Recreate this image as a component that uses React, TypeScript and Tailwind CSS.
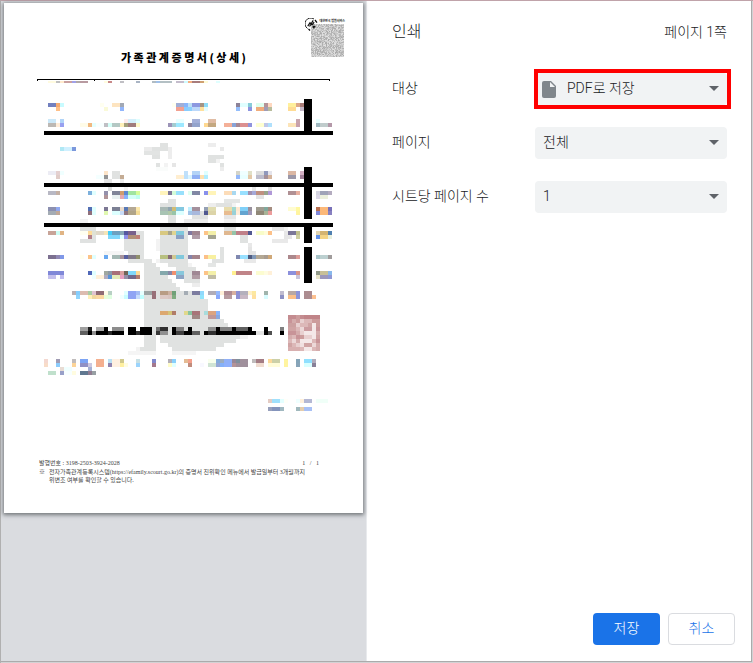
import type { ReactNode } from 'react';

const CELL = 4;

// Rows of the document body: y position, then "column[-lastColumn]:colour".
const WATERMARK: [number, string][] = [
  [143, '40-41:e0e2e1 52-53:ededed'],
  [147, '36-37:ebebeb 38-41:e0e2e1 42:ededed 55:e9e9e9'],
  [151, '36-39:e2e4e3 42:ededed'],
  [155, '38-39:e0e2e1 42:ededed 52-55:e0e2e1'],
  [159, '52-53:e0e2e1 54:f3f3f3'],
  [163, '39:e0e2e1 41:f3f3f3 43:e6e6e6 55:e0e2e1'],
  [167, '39-41:fafcfb 55:ededed'],
  [171, '28-29:e0e2e1'],
  [175, '28-29:e0e2e1'],
  [179, '26-27:e6e6e6 30:ededed'],
  [187, '27:e0e2e1 31:f3f3f3 63:e8e8e8 67:e4e4e4'],
  [199, '42-43:e0e2e1 56-59:e4e6e5'],
  [203, '40-43:e0e2e1 52-53:ededed 54-57:e0e2e1 58:f3f3f3'],
  [207, '40-43:e0e2e1'],
  [211, '48-51:e0e2e1'],
  [215, '42-43:e0e2e1 48-51:e0e2e1 56-58:e6e6e6'],
  [219, '20-21:f3f3f3 42-43:e0e2e1 46-51:ededed 56-58:f3f3f3'],
  [227, '20-23:e0e2e1 40-46:e0e2e1 56-58:e0e2e1 68-70:e8e8e8 71:f3f3f3'],
  [231, '23:e0e2e1 31-35:e0e2e1 40-46:e0e2e1 71:e8e8e8'],
  [235, '23:e0e2e1 31-35:e0e2e1 40-46:e0e2e1 60-61:e0e2e1 71-72:e6e6e6'],
  [239, '20-23:e0e2e1 31-35:e0e2e1 39:f3f3f3 40-46:e0e2e1 60-61:e0e2e1 68-71:e9e9e9'],
  [243, '31-35:e0e2e1 39:f3f3f3 40-46:e0e2e1 62:e8e8e8'],
  [247, '31-35:e0e2e1 39:f3f3f3 40-46:e0e2e1 55:e0e2e1 62:e4e4e4'],
  [251, '26-30:f5f5f5 32-35:e0e2e1 40-46:e0e2e1 55:e0e2e1 62-63:e4e4e4'],
  [255, '35:e0e2e1 40-46:e0e2e1 55:e0e2e1'],
  [259, '32-37:e0e2e1 39:f3f3f3 40-46:e0e2e1 53-55:e0e2e1 61-63:e9e9e9'],
  [263, '36-38:e0e2e1 42-46:e0e2e1 47:f3f3f3 52-53:e4e6e5'],
  [267, '36-39:e0e2e1 44-48:e0e2e1'],
  [271, '36-39:e0e2e1 46-47:e0e2e1'],
  [275, '36-41:e0e2e1 46-47:e0e2e1'],
  [279, '36-42:e0e2e1 46-49:e0e2e1'],
  [283, '36-43:e0e2e1 48-49:ededed'],
  [287, '36-44:e0e2e1'],
  [291, '36-50:e0e2e1'],
  [295, '36-50:e0e2e1'],
  [299, '36-51:e0e2e1'],
  [303, '36-51:e0e2e1'],
  [307, '36-51:e0e2e1'],
  [311, '36-52:e0e2e1'],
  [315, '36-53:e0e2e1'],
  [319, '36-55:e0e2e1'],
  [323, '36-56:e0e2e1'],
  [327, '36-56:e0e2e1'],
  [331, '36-61:e0e2e1'],
  [335, '36-38:e0e2e1 40-59:e0e2e1 60-61:f3f3f3'],
  [339, '36-38:e0e2e1 40-58:e0e2e1'],
  [343, '36-38:e0e2e1 42-55:e0e2e1'],
  [347, '34:f3f3f3 35-38:e0e2e1 43-53:e0e2e1'],
  [351, '32-38:f5f5f5 43-48:f5f5f5'],
];

const MOSAIC: [number, string][] = [
  [103, '12-13:7280bf 14:f4aa70 15:c8fbff 25:fffff0 28-29:fde4c0 30:a2a8b4 43:fffff0 44-45:a0aed6 46:88b4fa 47:bcdff5 48-49:8c98e0 50:a49484 51:8cdcf8 59:8c8298 60-61:e0ffff 62:88ccd8 64-65:dfffee 66:b49498 67:ffd8c0 72-73:fff09c 74:dca888 75:a87c78'],
  [107, '14:ffc088 26:fafad8 30:92b6fc 44-45:f2a090 46:88ccff 47:8cd0fc 48-49:bcd8fa 50:ffe09c 51:e4fcff 59:94befc 62:8c94e0 64-65:f0ac7c 66:a09cb4 67:b8bc9c 72-73:ffdc94 75:c4b8c8'],
  [119, '12-13:cce8f8 15:b0d4f8 31:ffeaea 32-33:d4f0fa 34:e0ffff 44-45:e8ffff 48-49:a4b0d8 52-53:e0bca4 74:c8a4ac 79:e8ffff'],
  [123, '12-13:bcb8b4 14:ffecd8 15:98a0f0 20-21:fffce8 22:f0b880 23:e4ffff 24-25:f8ffff 26:c0bfc4 27:d4fff8 28-29:b4c8c4 30:fff0b8 31:a4a07c 32-33:a07c7c 34:fff8c8 42:9c94b8 43:a4ccd0 44-45:9ce8ff 47:9088a0 48-49:94a4cc 51:ffd890 52-53:c4a880 56-57:f4b098 58:88a4d8 59:a88894 60-61:dc9090 62:9094dc 64-65:ffffd0 66:c0c8e8 67:b0e0fc 72-73:fce4b8 74:c8a0ac 79:a0b8c0 80-81:c0cccc 82:b498a8'],
  [147, '15:b0e8f4 16-17:d0f0ff 18:7c98dc'],
  [171, '12-13:ececf4 14:e4d0d0 15:f0ffff 26:fce4c8 46:c0e0fa 48-49:b4d4f6 51:e0ffff 59:d4d4c8 60-61:f0ffff 62:e0e0c8 64-65:dcdcdc 66:9098bc 67:e4e4ec 72-73:dcb8a4 75:d4b0c4'],
  [175, '14:e0ccc8 24-25:f4ffff 26:949494 30:c4ac94 44-45:ffeed0 46:bce0fc 47:d8f4ff 48-49:90b0f4 50:ffe0b0 51:b0ecff 59:94b8fa 60-61:e8ffff 62:e4c8a8 64-65:bcbccc 66:a49098 67:d4b49c 72-73:9c98a8 75:a08098'],
  [191, '12-13:b8b8c4 14:c4b0a4 22:7cb0dc 23:e0ffff 26:9490ac 28-29:808498 30:d09c6c 31:5c88d0 32-33:a0e4a0 34:d4fc98 40-41:fff4bc 42:807898 43:d4fcd8 44-45:98e0fc 47:e0fff0 48-49:8088a4 51:8890ec 52-53:fff4b8 56-57:fcdcb8 58:a8d8f0 60-61:98e0ff 62:a090b0 63:a4a8d8 64-65:c09080 66:98a48c 67:b098d8 72-73:b09094 74:e8b0a0 79:d4d4e0 80-81:a0a4b8 82:b4acc0'],
  [195, '26:b09498 28-29:e8f0f0 30:e4a8b0 31:88b4fc 32-33:d4fff8 34:c0fff0 64-65:e4e4e4 79:dcd8e8 80-81:ecf0dc'],
  [207, '12-13:8c90b0 14:90a8f0 22:5470b4 23:e0ffff 26:7c7894 28-29:7c8094 30:ecdccc 31:5878b4 32-33:b4a894 34:fce8ac 40-41:a8b8b4 42:90a4b0 43:d0bc74 44-45:84c8e0 47:c0f0ff 48-49:a4909c 51:94a0b4 52-53:e0dcb0 56-57:e8dcac 58:a0d8d0 59:ffe8d0 60-61:80d0f8 62:98909c 64-65:a09c90 66:80a89c 67:a48c80 72-73:fffcd0 74:fff8a0 79:b87050 80-81:fcb878 82:7870b8'],
  [211, '12-13:a4acb4 14:c0a898 22:90707c 23:e0ffff 26:e0f8b0 28-29:dcffff 30:c8dcf8 31:907880 32-33:b0a488 34:f4dc98 40-41:a8c4b4 42:b0c8a8 43:98c4a8 44-45:dcffff 47:a0c4e8 48-49:a8b8dc 51:505890 52-53:dcd4a8 56-57:e8bc90 58:98d0d8 59:ffecd8 60-61:64a4d0 62:a098b8 64-65:908878 66:a8b498 67:ec9c9c 74:fff4a0 79:8088d8 80-81:fcb878 82:8880c0'],
  [231, '12-13:c8a498 14:ccfcf4 15:e0b484 20-21:fffff0 22:ffdc98 23:e0e2d4 24-25:e0d8c8 26:f4e4b8 27:44ccf8 28-29:6ca0c0 30:88a8b8 31:5458a0 32-33:78608c 40-41:d8c880 42:a8a48c 43:e0d490 44-45:80c8dc 47:8078a0 48-49:a08490 51:fcc488 52-53:f4f0a8 56-57:e0b890 58:94c4a8 59-61:c08088 62:505890 64-65:f8fcc8 66:fffcd8 67:fcc088 72-73:7c7898 74:c0c08c 79:e0d4b0 80-81:d4b470 82:5080b0'],
  [235, '22:b48088 27-29:80d8fc 30:e0ffff 31:9090e8 32-33:b09078 34:c08078 44-45:88a0c4 48-49:b09ca8 52-53:a4a490 74:d0d0a0 79:6090e8 80-81:f4d484 82:e8f0e0'],
  [255, '12-13:7c7090 14:9088b4 15:8098e8 20:fffff0 22:fcc488 23:e0ffff 26:68a8f0 28-29:a4b8b4 30:a8949c 31:5860a0 32-33:807888 34:90906c 40-41:b8c080 42:886c78 43:d0c890 44-45:80c8dc 47:8484ac 48-49:a4848c 51:fcc088 52-53:f8f0a0 59:8088b0 60-61:98e0ff 62:505c80 63:8098b8 64-65:b4a894 66:a89c90 67:d0a878 72-73:ac888c 74:dc9c98 79:a8c4c8 80-81:bcd0d0 82:a09c9c'],
  [271, '12-15:8088d8 22:5068b8 23:e0ffff 26:a0a8a0 27:8c98a4 28-29:a87078 30:d8a0a0 31:706458 32-33:80d8fc 34:fcdc98 40-41:84a8ac 42:8888a8 43:f09070 44-45:88c8dc 48-49:a08894 51:fcc488 52-53:f4f0a8 58:fff090 59-62:c08488 64-65:fcfcd0 66:fffce0 67:fff0d8 72-73:8c90dc 74:d89488 79:909888 80-81:c8c098 82:88b8ec'],
  [275, '12-13:c4c0ec 15:c0bcf0 23:f0ffff 24-25:fff0d8 26:b0acc0 27:5894d8 28-29:e4ecb8 30:e8a0c0 31:9490a8 32-33:70688c 34:b07c70 44-45:8ca4c4 48-49:b09ca4 52-53:c0bca4 74:c8c4dc 79:e8e4c8 80-81:9c98bc 82:9098d4'],
  [291, '18:b8b0b4 19:84ccfc 20-21:dcbcb0 22:a8cca4 23:e0c4d0 24-25:906c74 26:fffce8 27:b8d0c4 31:e0ffff 32-33:90a4f4 34:a4bcf4 35:e8ffff 36-37:9ca4a4 38:987078 40-41:b89c84 42:ccb0a0 43:70a078 46:a4acb4 48-49:7c7ca0 50:90d8fc 52-53:b0acb8 54:94b8fc 55:fff0d8 56-57:b08c94 58:d8b0a0 59:8c90d4 60-61:b4b0bc 62:fff0c8 63:fce8a0 66:a0b4ac 70:c0bcd0 72-73:b8a8a4 74:8c94d8 76-77:ac8c90'],
  [295, '19:90d4fc 22:fff0b8 23:f0d8a0 24-25:fcd8a0 26:e8ffd8 27:e0ffe0 30:f0ffff 31:c8fcff 32-33:90a4f4 34:c8dcfc 35:c0ffff 38:987078 40-41:dcc8c4 42:d8c4c0 43:80ac80 50:90e4fc 54:88a8fc 56-57:b89ca0 59:8c90d4 60-61:c8b8c4 63:ffe0a0 66:d8fcff 70:8c90c4 72-73:fcc088 74:8c94d8 76-77:ac8c90 78:fcc090'],
  [311, '40-41:dca870 42:d4c478 43:b07c68 46:e0d88c 47:88c4a0 48-49:a87478 51:a8dcdc 52-53:dca480 54:88b4fc'],
  [315, '48-49:a08884 52-53:c09898 54:88a8e0'],
  [327, '20-21:a0a0a0 22:202020 24-25:a8a8a8 26:000000 28-30:8c8c8c 32-33:000000 35-37:000000 39:707070 40-41:303030 43:000000 44-45:808080 47:000000 52-53:909090 54:000000 55-57:808080 58:000000 59-61:606060 62:000000 66:000000 70:808080'],
  [331, '20-21:606060 22:000000 23:909090 24-26:000000 27:282828 28-30:000000 32-33:000000 34:303030 35-37:000000 39:383838 40-41:909090 43:000000 44-45:404040 46-47:000000 48-49:606060 51:000000 52-53:303030 54-63:000000 64-65:e4e4e4 66:000000 67:505050 70:000000'],
  [359, '11:f4d8d0 14:a09cb4 18:c0bcbc 20-21:7ca4f4 24-25:f4b090 27:b8e0f4 28-29:fff0e0 30:d0c88c 34:c8e0e4 38:8088cc 42:b4b0b8 43:88d0fc 46:e4bc94 47:f4a08c 52-53:f8ffec 54:84acdc 55:9cacc0 56-57:90b0f8 58:988898 59:80909c 60-61:a0909c 63:c0bcbc 64-65:a47c84 67:fcd898 68-69:ccd0a8 71:fff4a0 74:84a4b8 76-77:90e0ff 78:b0acbc'],
  [363, '11:f8dcc8 14:8cccfc 18:fcd498 20-21:9090c4 22:ccc8e0 24-25:f4b090 27:9084b0 28-29:fff0e0 30:fff0a0 31:fffce0 34:9cd4fc 38:a4788c 42:fffcc8 43:e0ffff 47:c08c7c 50:f8f8ff 52-53:d0e4d4 54:94a8d8 55:84b0f8 56-57:90b0fc 58:b49498 59-61:a0909c 64-65:f0dcd0 67-69:fffcd8 71:fff4a0 74:88a4b8 76-77:d8ffff 78:888098'],
  [367, '15:e8dcd4 16-17:f0ffff 22:a4b0d4'],
  [371, '12-13:c0e0cc 15:98a0c8 16-17:f8ffff 18:fffce0 20-21:607890 22:907c90 23:98a0a4'],
  [399, '67:e4ccc4 68-69:a0e0fc 70:e4ffff 71:fffff8 74:f0ffff 75:fff0dc 76-77:b4b8d4 79-81:f0fff8'],
  [407, '67:98a0bc 68-69:8494bc 70:a0b8c0 74:a0b8bc 75:e4ccac 76-77:a8c0f4'],
];

const SEAL: [number, string][] = [
  [315, '72-73:c48c90 74:cc9c9c 75:c48c90 76-79:c08488'],
  [319, '72:c89498 73:d4acac 74:cc9c9c 75:e8d0d0 76-77:dcb8b8 78-79:cc9c9c'],
  [323, '72-73:cca0a0 74:e8d0d0 75-76:dcb8b8 77:d0a4a4 78:f4e8e8 79:cc9c9c'],
  [327, '72-73:d0a4a4 74:dcb8b8 75:ecd8d8 76-77:cc9ca0 78:f4e8e8 79:c89498'],
  [331, '72-73:c89498 74:d4acac 75:e8d0d0 76-78:f4e8e8 79:d4acac'],
  [335, '72:d4acac 73:dcb8b8 74:c89498 75:cc9c9c 76-77:e8d0d0 78:f4e8e8 79:d0a4a4'],
  [339, '72:dcb8b8 73:ecd8d8 74:d4acac 75:f4e8e8 76-77:f4e8e8 78:dcb8b8 79:c89498'],
  [343, '72:d0a4a4 73:dcb8b8 74:e8d0d0 75:f0e0e0 76-77:d0a4a4 78:ecd8d8 79:d4acac'],
  [347, '72-74:d8b0b0 75:dcb8b8 76-77:f4e8e8 78:dcb8b8 79:d4acac'],
];

const HEADER_ROW: [number, string][] = [
  [81, '12-13:fffbe0 14:c0c0c0 15:ffeacc 16-17:c9a0a0 18:a0a0e8 19:b0a8a8 20-21:b89aa0 26:fffde0 27:c88888 30:c0bfc4 34:a9b4c4 38:b0bcc4 39:a0c0e8 40-42:b4c0c4 44-45:c4bccc 46:d0fbff 47:f4b080 48-49:a87c7c 50:cfa070 51:fffcd8 54:e0ffff'],
];

function Cells({ rows, height = CELL }: { rows: [number, string][]; height?: number }) {
  return (
    <>
      {rows.flatMap(([y, cells]) =>
        cells.split(' ').map((cell) => {
          const [span, color] = cell.split(':');
          const [from, to = from] = span.split('-').map(Number);
          return (
            <rect
              key={`${y}-${from}`}
              x={from * CELL}
              y={y}
              width={(to - from + 1) * CELL}
              height={height}
              fill={`#${color}`}
            />
          );
        }),
      )}
    </>
  );
}

function CertificateBody() {
  return (
    <svg
      className="mt-[13px] ml-8 h-[336px] w-[300px]"
      viewBox="36 79 300 336"
      shapeRendering="crispEdges"
      aria-hidden="true"
    >
      <path d="M37 79h293v2h-1v-1H95v1h-1v-1H38v1h-1z" fill="#000" />
      <Cells rows={HEADER_ROW} height={2} />
      <Cells rows={WATERMARK} />
      <Cells rows={MOSAIC} />
      <Cells rows={SEAL} />
      <path d="M44 131h289v4H44zM44 183h289v4H44zM44 223h289v4H44z" fill="#000" />
      <path d="M304 99h8v32h-8zM304 167h8v52h-8zM304 227h8v16h-8zM304 247h8v36h-8z" fill="#000" />
    </svg>
  );
}

function noise(size: number) {
  let seed = 17;
  return Array.from({ length: size * size }, () => {
    seed = (seed * 1103515245 + 12345) % 2147483648;
    return 168 + Math.floor((seed / 2147483648) * 60);
  });
}

const BARCODE_SIZE = 33;
const BARCODE = noise(BARCODE_SIZE);

function Barcode() {
  return (
    <svg className="h-[33px] w-[33px]" viewBox="0 0 33 33" shapeRendering="crispEdges" aria-hidden="true">
      {BARCODE.map((v, i) => (
        <rect
          key={i}
          x={i % BARCODE_SIZE}
          y={Math.floor(i / BARCODE_SIZE)}
          width="1"
          height="1"
          fill={`rgb(${v},${v},${v})`}
        />
      ))}
    </svg>
  );
}

function CourtLogo() {
  return (
    <svg className="absolute top-0 -left-1.5 h-[13px] w-[13px]" viewBox="0 0 13 13" fill="none" aria-hidden="true">
      <path d="M2.5 10.5A5.6 5.6 0 0 1 9 1" stroke="#222" strokeWidth="1" />
      <path d="M2.8 8.2 5 4.8l1 1.2 2.2-3.6M4.5 8.5l2-2.8 1 .8 1.6-2.4" stroke="#111" strokeWidth="1.2" />
      <path d="m10 2 2 2.6M3.5 11l1.6 1.5M7.5 8.5h3M8.2 10.3 10 8.4" stroke="#111" strokeWidth="1.3" />
    </svg>
  );
}

function Certificate() {
  return (
    <article className="mx-[3px] mt-0.5 bg-white pb-[29px] font-['Noto_Sans_CJK_KR',sans-serif] font-normal shadow-[0_1px_4px_1px_rgba(60,64,67,0.65)]">
      <header className="grid h-[63px] grid-cols-[1fr_auto_1fr] pt-[15px]">
        <span />
        <h2 className="self-end text-[11px] leading-[18px] font-black whitespace-nowrap text-black">
          가 족 관 계 증 명 서 ( 상 세 )
        </h2>
        <div className="relative mr-[18px] justify-self-end">
          <CourtLogo />
          <p className="h-1.5 pl-2 text-[3px] leading-[6px] font-bold whitespace-nowrap text-black">대한민국 법원서비스</p>
          <Barcode />
        </div>
      </header>
      <CertificateBody />
      <footer className="mt-11 pr-11 pl-[35px] font-['Liberation_Serif','Noto_Sans_CJK_KR',serif] text-[6px] leading-[8px] text-[#444]">
        <div className="flex justify-between">
          <p>발행번호 : 3198-2503-3924-2028</p>
          <p className="whitespace-pre">1   /   1</p>
        </div>
        <div className="mt-px flex gap-1 whitespace-nowrap">
          <span>※</span>
          <p>
            전자가족관계등록시스템(https://efamily.scourt.go.kr)의 증명서 진위확인 메뉴에서 발급일부터 3개월까지
            <br />
            위변조 여부를 확인할 수 있습니다.
          </p>
        </div>
      </footer>
    </article>
  );
}

interface SettingProps {
  id: string;
  label: string;
  value: string;
  icon?: ReactNode;
  highlighted?: boolean;
}

function Setting({ id, label, value, icon, highlighted }: SettingProps) {
  return (
    <div className="flex h-[54px] items-center justify-between">
      <label htmlFor={id} className="pb-0.5">
        {label}
      </label>
      <div className="relative w-48">
        <select
          id={id}
          className={`block h-8 w-full appearance-none rounded bg-[#f1f3f4] pr-8 pb-0.5 text-[#202124] ${icon ? 'pl-8' : 'pl-2'}`}
        >
          <option>{value}</option>
        </select>
        {icon}
        <svg className="pointer-events-none absolute top-[13px] right-2 h-[5px] w-2.5" viewBox="0 0 10 5" aria-hidden="true">
          <path d="M0 0h10L5 5z" fill="#5f6368" />
        </svg>
        {highlighted && (
          <span className="pointer-events-none absolute -top-1 -right-1 -bottom-1 -left-px border-4 border-[#ff0000]" />
        )}
      </div>
    </div>
  );
}

function FileIcon() {
  return (
    <svg className="pointer-events-none absolute top-2 left-[7px] h-[17px] w-3.5" viewBox="0 0 14 17" aria-hidden="true">
      <path d="M2 0h7l5 5v10a2 2 0 0 1-2 2H2a2 2 0 0 1-2-2V2a2 2 0 0 1 2-2z" fill="#80868b" />
      <path d="M8 1v5h5z" fill="#f1f3f4" />
    </svg>
  );
}

export default function App() {
  return (
    <div className="flex min-h-screen border-t border-l border-t-[#c0a3aa] border-l-[#b0b0b0] bg-[#d2d2d4] pr-px pb-px font-[Roboto,'Noto_Sans_CJK_KR',sans-serif] text-sm font-light text-[#202124]">
      <div className="flex flex-1 border-r border-b border-[#ababab] bg-white">
        <section className="min-w-0 flex-1 border-r border-[#e8eaed] bg-[#dadce0]">
          <Certificate />
        </section>
        <main className="flex w-96 shrink-0 flex-col">
          <header className="flex h-[61px] items-center justify-between pr-6 pl-[25px]">
            <h1 className="text-base font-light">인쇄</h1>
            <span>페이지 1쪽</span>
          </header>
          <form className="flex flex-1 flex-col">
            <div className="pr-6 pl-[25px]">
              <Setting id="destination" label="대상" value="PDF로 저장" icon={<FileIcon />} highlighted />
              <Setting id="pages" label="페이지" value="전체" />
              <Setting id="per-sheet" label="시트당 페이지 수" value="1" />
            </div>
            <div className="mt-auto flex justify-end gap-2 p-4">
              <button type="button" className="h-8 w-[67px] rounded bg-[#1a73e8] pb-0.5 text-white">
                저장
              </button>
              <button type="button" className="h-8 w-[67px] rounded border border-[#dadce0] bg-white pb-0.5 text-[#1a73e8]">
                취소
              </button>
            </div>
          </form>
        </main>
      </div>
    </div>
  );
}
